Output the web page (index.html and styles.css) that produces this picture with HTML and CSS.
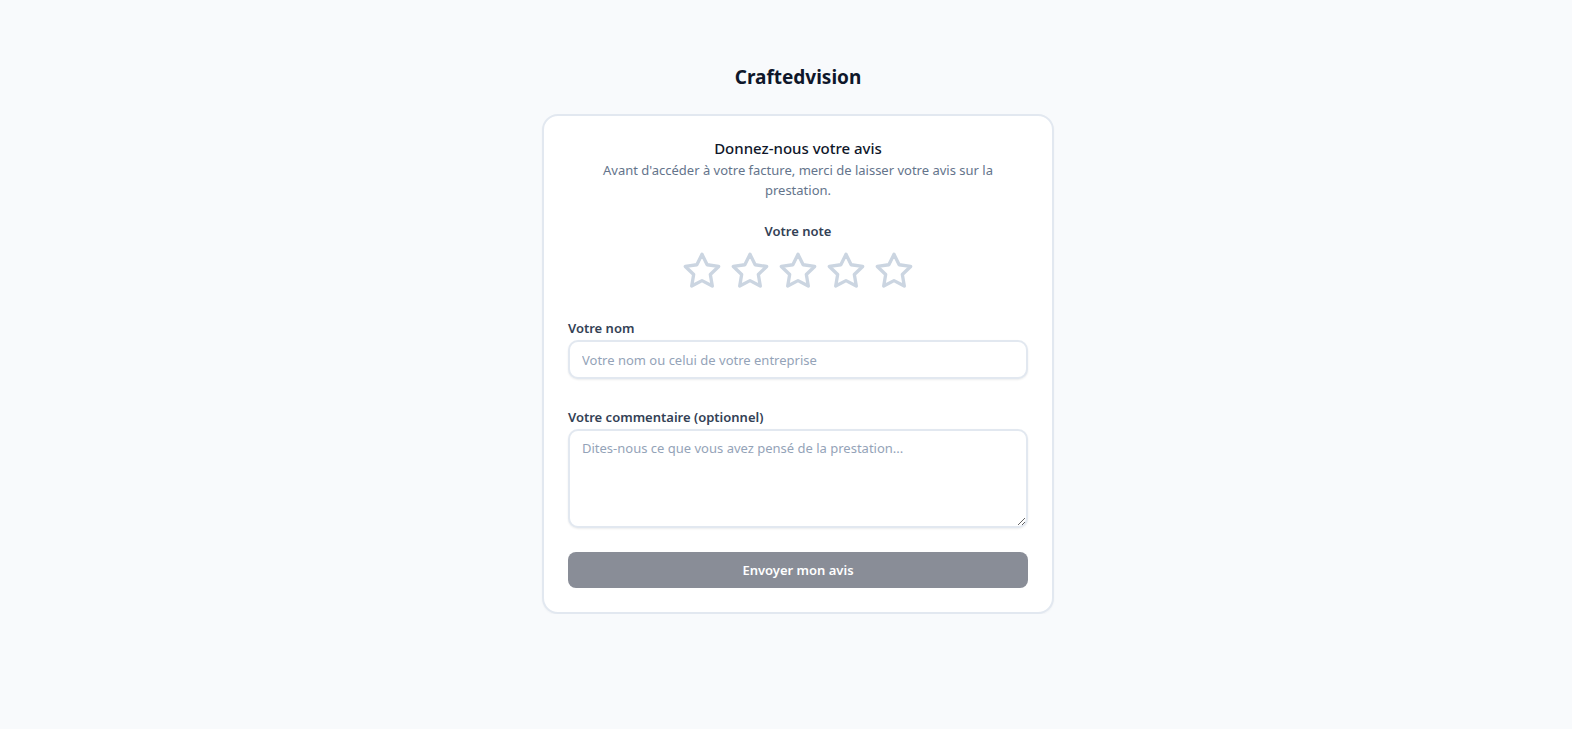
FILE: index.html
```html
<!DOCTYPE html>
<html lang="fr">
<head>
<meta charset="utf-8">
<title>Craftedvision - Avis</title>
<link rel="stylesheet" href="styles.css">
</head>
<body>
<main class="page">
  <h1 class="brand">Craftedvision</h1>
  <section class="card">
    <h2 class="card-title">Donnez-nous votre avis</h2>
    <p class="card-sub">Avant d'accéder à votre facture, merci de laisser votre avis sur la prestation.</p>

    <div class="rating">
      <div class="rating-label">Votre note</div>
      <div class="stars">
        <button class="star" type="button" aria-label="1 étoile"><svg viewBox="0 0 24 24" width="40" height="40"><polygon points="12 2 15.09 8.26 22 9.27 17 14.14 18.18 21.02 12 17.77 5.82 21.02 7 14.14 2 9.27 8.91 8.26 12 2"/></svg></button>
        <button class="star" type="button" aria-label="2 étoiles"><svg viewBox="0 0 24 24" width="40" height="40"><polygon points="12 2 15.09 8.26 22 9.27 17 14.14 18.18 21.02 12 17.77 5.82 21.02 7 14.14 2 9.27 8.91 8.26 12 2"/></svg></button>
        <button class="star" type="button" aria-label="3 étoiles"><svg viewBox="0 0 24 24" width="40" height="40"><polygon points="12 2 15.09 8.26 22 9.27 17 14.14 18.18 21.02 12 17.77 5.82 21.02 7 14.14 2 9.27 8.91 8.26 12 2"/></svg></button>
        <button class="star" type="button" aria-label="4 étoiles"><svg viewBox="0 0 24 24" width="40" height="40"><polygon points="12 2 15.09 8.26 22 9.27 17 14.14 18.18 21.02 12 17.77 5.82 21.02 7 14.14 2 9.27 8.91 8.26 12 2"/></svg></button>
        <button class="star" type="button" aria-label="5 étoiles"><svg viewBox="0 0 24 24" width="40" height="40"><polygon points="12 2 15.09 8.26 22 9.27 17 14.14 18.18 21.02 12 17.77 5.82 21.02 7 14.14 2 9.27 8.91 8.26 12 2"/></svg></button>
      </div>
    </div>

    <div class="field">
      <label class="field-label" for="nom">Votre nom</label>
      <input class="input" id="nom" type="text" placeholder="Votre nom ou celui de votre entreprise">
    </div>

    <div class="field">
      <label class="field-label" for="comment">Votre commentaire (optionnel)</label>
      <textarea class="textarea" id="comment" placeholder="Dites-nous ce que vous avez pensé de la prestation..."></textarea>
    </div>

    <button class="submit" type="button" disabled>Envoyer mon avis</button>
  </section>
</main>
</body>
</html>
```

FILE: styles.css
```css
* { box-sizing: border-box; }

html, body {
  margin: 0;
  padding: 0;
}

body {
  background: #f8fafc;
  font-family: "Noto Sans", "Open Sans", sans-serif;
  color: #0f172a;
}

.page {
  display: flex;
  flex-direction: column;
  align-items: center;
  padding-top: 63px;
  padding-left: 24px;
}

.brand {
  margin: 0 0 23px;
  font-size: 19px;
  line-height: 28px;
  font-weight: 700;
  color: #0f172a;
}

.card {
  width: 512px;
  background: #ffffff;
  border: 2px solid #e2e8f0;
  border-radius: 16px;
  padding: 20px 24px 24px;
  box-shadow: 0 1px 2px rgba(15, 23, 42, 0.04);
  display: flex;
  flex-direction: column;
}

.card-title {
  margin: 0;
  text-align: center;
  font-size: 15px;
  line-height: 24px;
  font-weight: 500;
  color: #0f172a;
}

.card-sub {
  margin: 0 auto;
  max-width: 420px;
  text-align: center;
  font-size: 13px;
  line-height: 20px;
  color: #64748b;
}

.rating {
  margin-top: 21px;
  display: flex;
  flex-direction: column;
  align-items: center;
}

.rating-label {
  font-size: 13px;
  line-height: 20px;
  font-weight: 600;
  color: #334155;
}

.stars {
  margin-top: 10px;
  display: flex;
  gap: 8px;
}

.star {
  padding: 0;
  border: 0;
  background: none;
  cursor: pointer;
  display: block;
  width: 40px;
  height: 40px;
}

.star svg {
  display: block;
  fill: none;
  stroke: #cbd5e1;
  stroke-width: 2;
  stroke-linecap: round;
  stroke-linejoin: round;
}

.field {
  display: flex;
  flex-direction: column;
  margin-top: 27px;
}

.field + .field {
  margin-top: 28px;
}

.field-label {
  font-size: 13px;
  line-height: 20px;
  font-weight: 600;
  color: #334155;
  margin-bottom: 2px;
}

.input,
.textarea {
  width: 100%;
  font-family: inherit;
  font-size: 13px;
  color: #0f172a;
  background: #ffffff;
  border: 2px solid #e2e8f0;
  border-radius: 10px;
  padding: 8px 12px;
  box-shadow: 0 1px 2px rgba(15, 23, 42, 0.08);
  outline: none;
}

.input {
  height: 39px;
}

.textarea {
  height: 99px;
  resize: vertical;
  line-height: 20px;
  padding-top: 7px;
}

.input::placeholder,
.textarea::placeholder {
  color: #94a3b8;
}

.submit {
  margin-top: 24px;
  height: 36px;
  width: 100%;
  border: 0;
  border-radius: 8px;
  background: #898d97;
  color: #ffffff;
  font-family: inherit;
  font-size: 13px;
  font-weight: 600;
}
```
